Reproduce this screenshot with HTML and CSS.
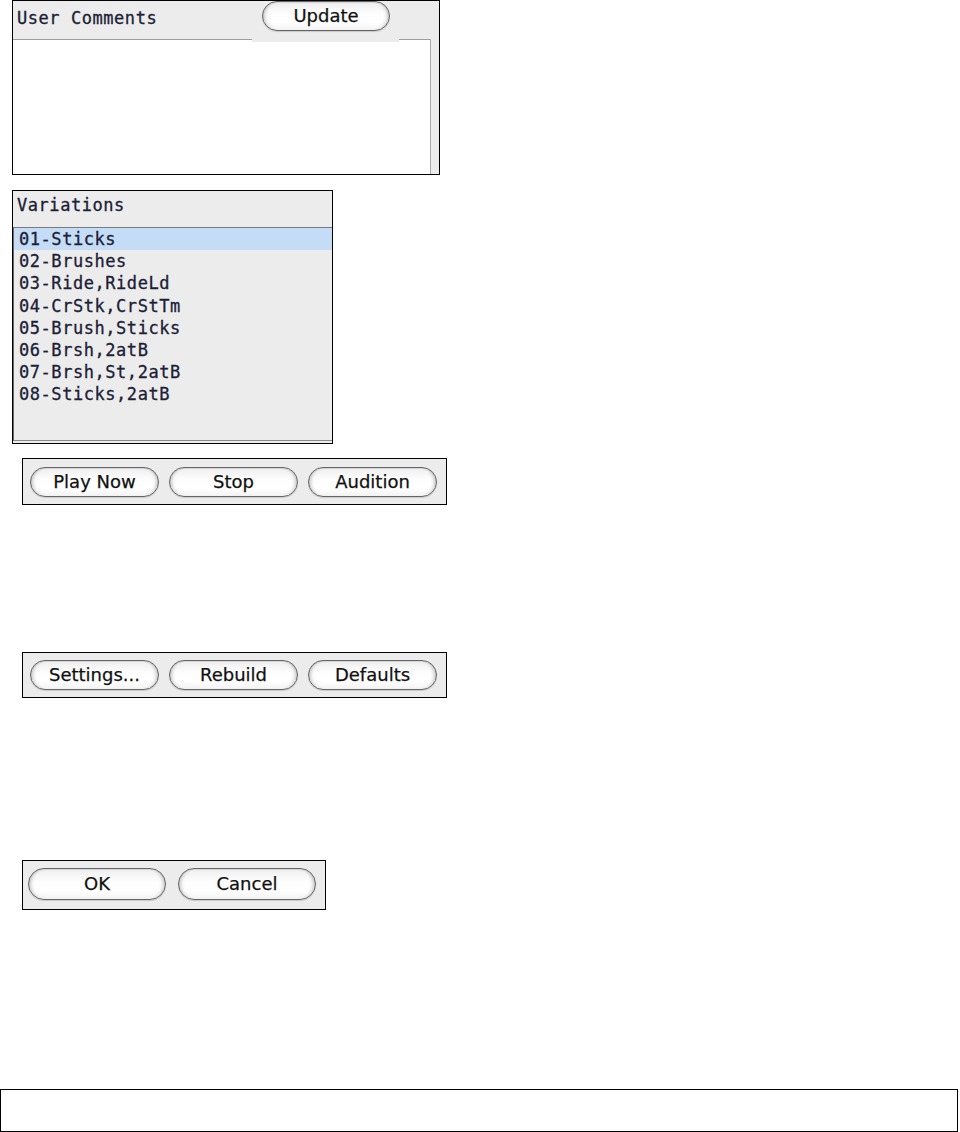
FILE: index.html
```html
<!DOCTYPE html>
<html lang="en">
<head>
<meta charset="utf-8">
<title>Style Settings</title>
<link rel="stylesheet" href="styles.css">
</head>
<body>
<div class="page">
  <section class="panel comments">
    <div class="comments-head">
      <span class="label">User Comments</span>
      <button class="aqua btn-update">Update</button>
    </div>
    <div class="comments-field"></div>
  </section>

  <section class="panel variations">
    <div class="var-head"><span class="label">Variations</span></div>
    <ul class="var-list">
      <li class="selected">01-Sticks</li>
      <li>02-Brushes</li>
      <li>03-Ride,RideLd</li>
      <li>04-CrStk,CrStTm</li>
      <li>05-Brush,Sticks</li>
      <li>06-Brsh,2atB</li>
      <li>07-Brsh,St,2atB</li>
      <li>08-Sticks,2atB</li>
    </ul>
  </section>

  <section class="panel bar bar-play">
    <button class="aqua">Play Now</button>
    <button class="aqua">Stop</button>
    <button class="aqua">Audition</button>
  </section>

  <section class="panel bar bar-settings">
    <button class="aqua">Settings...</button>
    <button class="aqua">Rebuild</button>
    <button class="aqua">Defaults</button>
  </section>

  <section class="panel bar bar-ok">
    <button class="aqua">OK</button>
    <button class="aqua">Cancel</button>
  </section>

  <div class="footer-box"></div>
</div>
</body>
</html>
```

FILE: styles.css
```css
html, body {
  margin: 0;
  padding: 0;
  background: #ffffff;
}

.page {
  display: flex;
  flex-direction: column;
  align-items: flex-start;
}

.panel {
  box-sizing: border-box;
  border: 1px solid #000;
  background: #ececec;
}

.label {
  font-family: "DejaVu Sans Mono", "Liberation Mono", monospace;
  font-size: 17px;
  letter-spacing: 0.55px;
  line-height: 20px;
  color: #1b2036;
  -webkit-text-stroke: 0.3px #1b2036;
}

/* ---------- User Comments ---------- */
.comments {
  margin-left: 12px;
  width: 428px;
  height: 175px;
}

.comments-head {
  height: 38px;
  display: flex;
  justify-content: space-between;
  align-items: flex-start;
  padding-right: 49px;
}

.comments-head .label {
  padding: 7px 0 0 4px;
}

.comments-field {
  height: 135px;
  margin-right: 8px;
  border-right: 1px solid #a9a9a9;
  background:
    linear-gradient(#ececec, #ececec) 239px 0 / 147px 3px no-repeat,
    linear-gradient(#9d9d9d, #9d9d9d) 0 0 / 100% 1px no-repeat,
    #ffffff;
}

/* ---------- Variations ---------- */
.variations {
  margin-top: 15px;
  margin-left: 12px;
  width: 321px;
  height: 254px;
}

.var-head {
  height: 36px;
  box-sizing: border-box;
  padding: 4px 0 0 4px;
}

.var-head .label {
  display: block;
}

.var-list {
  list-style: none;
  margin: 0 0 2px 0;
  padding: 0;
  height: 214px;
  box-sizing: border-box;
  border-top: 1px solid #7a7a7a;
  border-left: 1px solid #6a6a6a;
  border-bottom: 1px solid #8a8a8a;
  background: #ececec;
}

.var-list li {
  box-sizing: border-box;
  height: 22.15px;
  padding: 1.15px 0 0 5px;
  font-family: "DejaVu Sans Mono", "Liberation Mono", monospace;
  font-size: 17px;
  letter-spacing: 0.55px;
  line-height: 21px;
  color: #1b2036;
  -webkit-text-stroke: 0.3px #1b2036;
  white-space: nowrap;
}

.var-list li.selected {
  background: #c5dcf6;
}

/* ---------- Button bars ---------- */
.bar {
  display: flex;
  align-items: flex-start;
  margin-left: 22px;
}

.bar-play {
  margin-top: 14px;
  width: 425px;
  height: 47px;
  padding: 8px 0 0 7px;
  gap: 10px;
}

.bar-settings {
  margin-top: 147px;
  width: 425px;
  height: 46px;
  padding: 7px 0 0 7px;
  gap: 10px;
}

.bar-ok {
  margin-top: 162px;
  width: 304px;
  height: 50px;
  padding: 7px 0 0 5px;
  gap: 12px;
}

.aqua {
  box-sizing: border-box;
  width: 129px;
  height: 30px;
  margin: 0;
  padding: 0;
  border: 1px solid #666666;
  border-radius: 15px;
  background: linear-gradient(#eeeeee 0%, #fdfdfd 40%, #ffffff 72%, #f3f3f3 100%);
  box-shadow:
    inset 5px 0 4px -4px rgba(0, 0, 0, 0.3),
    inset -5px 0 4px -4px rgba(0, 0, 0, 0.3),
    inset 0 1px 1px rgba(0, 0, 0, 0.1),
    0 1px 1px rgba(0, 0, 0, 0.15);
  font-family: "DejaVu Sans", "Liberation Sans", sans-serif;
  font-size: 18px;
  line-height: 28px;
  color: #111111;
  -webkit-text-stroke: 0.25px #111111;
  text-align: center;
  white-space: nowrap;
}

.btn-update {
  width: 128px;
}

.bar-ok .aqua {
  width: 138px;
  height: 32px;
  border-radius: 16px;
  line-height: 30px;
}

/* ---------- Bottom box ---------- */
.footer-box {
  box-sizing: border-box;
  margin-top: 179px;
  width: 958px;
  height: 43px;
  border: 1px solid #000;
  background: #fff;
}
```
